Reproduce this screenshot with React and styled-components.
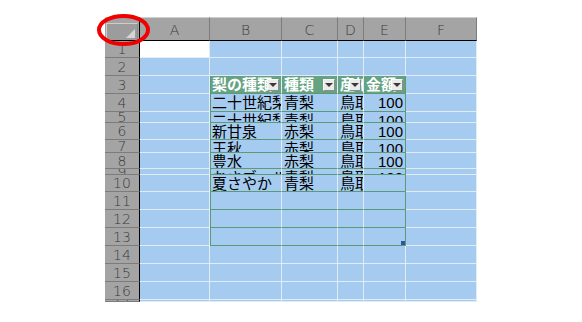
import React from "react";
import styled, { createGlobalStyle } from "styled-components";

const colWidths = [70, 72, 56, 26, 42, 71];
const rowHeights = [17, 18, 18, 18, 11, 17, 13, 16, 6, 17, 18, 18, 18, 18, 18, 18, 2];
const letters = ["A", "B", "C", "D", "E", "F"];

const colors = {
  header: "#a4a4a4",
  headerLine: "#7c7c7c",
  selected: "#a6cbf0",
  grid: "#e2ecf5",
  tableHead: "#64a281",
  tableLine: "#5b9a76",
  text: "#000",
  headText: "#3a3a3a",
};

// table (list object) spans B3:E13
const tableTop = 3;
const tableBottom = 13;
const tableLeft = 1;
const tableRight = 4;

const data = {
  3: ["梨の種類", "種類", "産地", "金額"],
  4: ["二十世紀梨", "青梨", "鳥取", "100"],
  5: ["二十世紀梨", "青梨", "鳥取", "100"],
  6: ["新甘泉", "赤梨", "鳥取", "100"],
  7: ["王秋", "赤梨", "鳥取", "100"],
  8: ["豊水", "赤梨", "鳥取", "100"],
  9: ["おさゴールド", "青梨", "鳥取", "100"],
  10: ["夏さやか", "青梨", "鳥取", ""],
};

const GlobalStyle = createGlobalStyle`
  html, body {
    margin: 0;
    background: #fff;
  }
  * {
    box-sizing: border-box;
  }
`;

const Page = styled.div`
  position: relative;
  width: 582px;
  height: 322px;
  padding: 17px 0 0 105px;
  font-family: "Liberation Sans", "Noto Sans CJK JP", sans-serif;
`;

const Sheet = styled.div`
  display: grid;
  grid-template-columns: 35px ${colWidths.map((w) => `${w}px`).join(" ")};
  grid-template-rows: 24px ${rowHeights.map((h) => `${h}px`).join(" ")};
  width: 372px;
  height: 285px;
  overflow: hidden;
`;

const Corner = styled.div`
  position: relative;
  background: ${colors.header};
  border-top: 1px solid #cfcfcf;
  border-right: 1px solid #000;
  border-bottom: 1px solid #000;
`;

const CornerBox = styled.div`
  position: absolute;
  left: 1px;
  right: 1px;
  top: 5px;
  bottom: 0;
  border-top: 1px solid #cdcdcd;
  border-left: 1px solid #cdcdcd;
  border-right: 1px solid #8a8a8a;
  background: #9c9c9c;

  &::after {
    content: "";
    position: absolute;
    right: 2px;
    bottom: 2px;
    width: 9px;
    height: 9px;
    background: #d6d6d6;
    clip-path: polygon(100% 0, 100% 100%, 0 100%);
  }
`;

const ColHeader = styled.div`
  display: flex;
  align-items: center;
  justify-content: center;
  background: ${colors.header};
  border-top: 1px solid #cfcfcf;
  border-right: 1px solid ${colors.headerLine};
  border-bottom: 1px solid #000;
  color: ${colors.headText};
  font-family: "DejaVu Sans", sans-serif;
  font-weight: 300;
  font-size: 14px;
  padding-top: 1px;
`;

const RowHeader = styled.div`
  display: flex;
  align-items: center;
  justify-content: center;
  overflow: hidden;
  background: ${colors.header};
  border-right: 1px solid #000;
  border-bottom: 1px solid ${colors.headerLine};
  color: ${colors.headText};
  font-family: "DejaVu Sans", sans-serif;
  font-weight: 300;
  font-size: 14px;
  line-height: 16px;
`;

const Cell = styled.div`
  position: relative;
  overflow: hidden;
  white-space: nowrap;
  padding: 0 2px;
  background: ${(p) => (p.$active ? "#fff" : p.$head ? colors.tableHead : colors.selected)};
  border-right: 1px solid ${(p) => (p.$tableRight ? colors.tableLine : colors.grid)};
  border-bottom: 1px solid ${(p) => (p.$inTable ? colors.tableLine : colors.grid)};
  box-shadow: ${(p) => (p.$tableLeft ? `inset 1px 0 0 ${colors.tableLine}` : "none")};
  color: ${(p) => (p.$head ? "#fff" : colors.text)};
  font-weight: ${(p) => (p.$head ? 700 : 400)};
  font-size: 15px;
  line-height: 17px;
  text-align: ${(p) => p.$align || "left"};
`;

const DropButton = styled.span`
  position: absolute;
  right: 2px;
  top: 3px;
  width: 12px;
  height: 12px;
  display: flex;
  align-items: center;
  justify-content: center;
  background: #ebebeb;
  border-top: 1px solid #fafafa;
  border-left: 1px solid #fafafa;
  border-right: 1px solid #8c8c8c;
  border-bottom: 1px solid #8c8c8c;

  &::before {
    content: "";
    border-left: 4px solid transparent;
    border-right: 4px solid transparent;
    border-top: 4px solid #3a3a3a;
  }
`;

const ResizeHandle = styled.span`
  position: absolute;
  right: 0;
  bottom: 0;
  width: 4px;
  height: 4px;
  background: #2f55a8;
`;

const Marker = styled.svg`
  position: absolute;
  left: 0;
  top: 0;
  pointer-events: none;
`;

function renderCell(row, col) {
  const inTable =
    row >= tableTop && row <= tableBottom && col >= tableLeft && col <= tableRight;
  const head = inTable && row === tableTop;
  const value = data[row] && col >= tableLeft && col <= tableRight ? data[row][col - 1] : "";
  return (
    <Cell
      key={`${row}-${col}`}
      $active={row === 1 && col === 0}
      $inTable={inTable}
      $head={head}
      $tableLeft={inTable && col === tableLeft}
      $tableRight={inTable && col === tableRight}
      $align={col === 4 && !head ? "right" : "left"}
    >
      {value}
      {head && <DropButton />}
      {row === tableBottom && col === tableRight && <ResizeHandle />}
    </Cell>
  );
}

export default function App() {
  return (
    <Page>
      <GlobalStyle />
      <Sheet>
        <Corner>
          <CornerBox />
        </Corner>
        {letters.map((l) => (
          <ColHeader key={l}>{l}</ColHeader>
        ))}
        {rowHeights.map((_, i) => {
          const row = i + 1;
          return (
            <React.Fragment key={row}>
              <RowHeader>{row}</RowHeader>
              {colWidths.map((_, col) => renderCell(row, col))}
            </React.Fragment>
          );
        })}
      </Sheet>
      <Marker width="582" height="322">
        <ellipse cx="123.5" cy="30" rx="24.5" ry="14" fill="none" stroke="#f00000" strokeWidth="4" />
      </Marker>
    </Page>
  );
}
